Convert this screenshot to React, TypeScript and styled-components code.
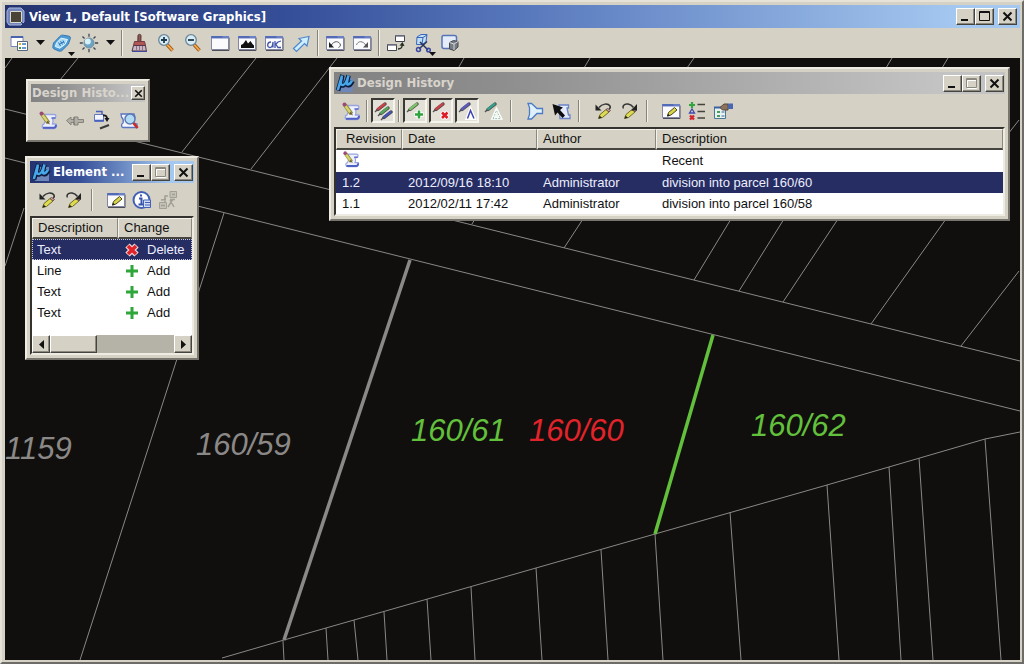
import React from "react";
import styled, { createGlobalStyle, css } from "styled-components";

const face = "#d5d1c5";
const navy = "#252d63";

const GlobalStyle = createGlobalStyle`
  * { box-sizing: border-box; }
  body { margin: 0; font-family: "Liberation Sans", Arial, sans-serif; font-size: 13px; color: #111; }
  button { font: inherit; color: inherit; padding: 0; margin: 0; border: 0; background: none; }
`;

const raised = css`
  border: 1px solid;
  border-color: #fff #45443f #45443f #fff;
  box-shadow: inset -1px -1px #8b897f;
`;

const Frame = styled.main`
  display: flex;
  flex-direction: column;
  height: 100vh;
  min-height: 400px;
  padding: 3px 2px 2px 3px;
  background: ${face};
  border: 2px solid;
  border-color: #e6e2d8 #6e6c68 #6e6c68 #e6e2d8;
`;

const TitleBar = styled.header<{ $tone: "main" | "active" | "idle" | "tool" }>`
  display: flex;
  align-items: center;
  gap: ${(p) => (p.$tone === "main" ? 3 : p.$tone === "tool" ? 0 : 2)}px;
  flex: none;
  overflow: hidden;
  height: ${(p) => (p.$tone === "main" ? 23 : p.$tone === "tool" ? 18 : 22)}px;
  padding: 0 ${(p) => (p.$tone === "main" ? 3 : p.$tone === "tool" ? 0 : 1)}px 0 1px;
  color: ${(p) => (p.$tone === "main" || p.$tone === "active" ? "#fff" : "#d8d4cc")};
  background: ${(p) =>
    p.$tone === "main"
      ? "linear-gradient(90deg, #25336f 0%, #354f98 28%, #5676bb 50%, #a4c8f0 94%)"
      : p.$tone === "active"
      ? "linear-gradient(90deg, #25336f 0%, #354f98 30%, #a4c8f0 85%)"
      : "linear-gradient(90deg, #828282 0%, #8e8e8e 25%, #c3c3c3 90%)"};
`;

const Title = styled.h1`
  flex: 1;
  min-width: 0;
  margin: 0;
  white-space: nowrap;
  font-family: "DejaVu Sans Condensed", "DejaVu Sans", sans-serif;
  font-size: 13px;
  font-weight: 700;
  line-height: 18px;
`;

const CaptionGroup = styled.div`
  display: flex;
  flex: none;
`;

const CaptionButton = styled.button<{ $small?: boolean; $apart?: boolean }>`
  display: grid;
  place-items: center;
  width: ${(p) => (p.$small ? 14 : 19)}px;
  height: ${(p) => (p.$small ? 14 : 17)}px;
  margin-left: ${(p) => (p.$apart ? 4 : 0)}px;
  background: ${face};
  ${raised}
`;

const MainTools = styled.nav`
  display: flex;
  align-items: center;
  flex: none;
  height: 30px;
`;

const MainTool = styled.button`
  position: relative;
  display: grid;
  place-items: center;
  width: 27px;
  height: 26px;
`;

const Corner = styled.svg`
  position: absolute;
  right: 0;
  bottom: 0;
`;

const Caret = styled.button`
  display: grid;
  place-items: center;
  width: 16px;
  height: 26px;
`;

const Divider = styled.span<{ $h?: number; $l?: number; $r?: number }>`
  flex: none;
  width: 2px;
  height: ${(p) => p.$h ?? 22}px;
  margin: 0 ${(p) => p.$r ?? 2}px 0 ${(p) => p.$l ?? 3}px;
  border-left: 1px solid #85837a;
  border-right: 1px solid #f4f2ea;
`;

const Canvas = styled.section`
  position: relative;
  flex: 1;
  min-height: 0;
  overflow: hidden;
  background: #110f0d;
`;

const MapSvg = styled.svg`
  display: block;
  width: 100%;
  height: 100%;
`;

const ParcelLabel = styled.text`
  font-family: "Liberation Sans", Arial, sans-serif;
  font-style: italic;
  font-size: 31px;
`;

const Panel = styled.section<{ $x: number; $y: number; $w?: number; $right?: number }>`
  position: absolute;
  left: ${(p) => p.$x}px;
  top: ${(p) => p.$y}px;
  ${(p) => (p.$right !== undefined ? `right: ${p.$right}px;` : `width: ${p.$w}px;`)}
  padding: 3px;
  background: ${face};
  border: 2px solid;
  border-color: #eeebe2 #77756e #77756e #eeebe2;
`;

const Tools = styled.div<{ $h: number; $gap: number; $pad: number }>`
  display: flex;
  align-items: center;
  height: ${(p) => p.$h}px;
  gap: ${(p) => p.$gap}px;
  padding-left: ${(p) => p.$pad}px;
`;

const Tool = styled.button<{ $on?: boolean }>`
  display: grid;
  place-items: center;
  flex: none;
  width: 24px;
  height: 25px;
  ${(p) =>
    p.$on &&
    css`
      background: #e3e0d8;
      border: 2px solid;
      border-color: #3a3935 #f6f4ee #f6f4ee #3a3935;
    `}
`;

const Sunken = styled.div`
  background: #fff;
  border: 2px solid;
  border-color: #33322f #eeebe2 #eeebe2 #33322f;
`;

const Table = styled.table`
  width: 100%;
  table-layout: fixed;
  border-collapse: separate;
  border-spacing: 0;
  white-space: nowrap;
`;

const Th = styled.th<{ $pad?: number }>`
  height: 21px;
  padding: 0 0 0 ${(p) => p.$pad ?? 5}px;
  text-align: left;
  font-weight: 400;
  line-height: 16px;
  background: ${face};
  border-top: 1px solid #f4f2ea;
  border-left: 1px solid #f4f2ea;
  border-right: 1px solid #8b897f;
  border-bottom: 2px solid #45443f;
`;

const Row = styled.tr<{ $selected?: boolean; $focus?: boolean }>`
  color: ${(p) => (p.$selected ? "#eef" : "#111")};
  background: ${(p) => (p.$selected ? navy : "#fff")};
  outline: ${(p) => (p.$focus ? "1px dotted #c8c8dc" : "none")};
  outline-offset: -1px;
`;

const Td = styled.td<{ $pad?: number }>`
  height: 21px;
  padding: 0 0 0 ${(p) => p.$pad ?? 6}px;
  line-height: 16px;
`;

const Change = styled.span`
  display: flex;
  align-items: center;
  gap: 7px;
`;

const ElementList = styled.div`
  min-height: 117px;
`;

const ScrollBar = styled.div`
  display: flex;
  height: 18px;
  background: #b5b2a8;
`;

const ScrollButton = styled.button<{ $w: number; $end?: boolean }>`
  display: grid;
  place-items: center;
  width: ${(p) => p.$w}px;
  margin-left: ${(p) => (p.$end ? "auto" : 0)};
  background: ${face};
  ${raised}
`;

/* ---------- icons ---------- */

const Icon = ({ children, size = 20 }: { children: React.ReactNode; size?: number }) => (
  <svg width={size} height={size} viewBox="0 0 20 20" fill="none" aria-hidden="true">
    {children}
  </svg>
);

const MinGlyph = () => (
  <svg width="11" height="11" viewBox="0 0 11 11"><path d="M1 8h7v2H1z" fill="#111" /></svg>
);
const MaxGlyph = ({ off }: { off?: boolean }) => (
  <svg width="11" height="11" viewBox="0 0 11 11" fill="none">
    {off && <path d="M1.500 2.500h9v8h-9z" stroke="#fff" />}
    <path d="M.5 .5h10v9H.5z" stroke={off ? "#8b897f" : "#111"} />
    <path d="M0 1.500h11" stroke={off ? "#8b897f" : "#111"} />
  </svg>
);
const CloseGlyph = ({ size = 11 }: { size?: number }) => (
  <svg width={size} height={size} viewBox="0 0 11 11" fill="none">
    <path d="M1.500 1.500l8 8M9.500 1.500l-8 8" stroke="#111" strokeWidth="2" />
  </svg>
);
const CaretGlyph = () => (
  <svg width="9" height="6" viewBox="0 0 9 6"><path d="M0 0h9L4.500 5z" fill="#111" /></svg>
);

const AppLogo = () => (
  <Icon size={20}>
    <path d="M4 5h14v14H4z" fill="#6f87b8" />
    <path d="M7.500 2 3 17.500M7 5C5 11 5.500 13 8 12.500S12 8 13.500 2.500c-2 7-2 10 0 9.800S16.500 10 17.500 8" stroke="#0d1a3c" strokeWidth="4.600" />
    <path d="M7 2.500 2.800 17M6.800 4.500C5 10.500 5.500 12.300 8 12S12 8 13.500 2.500c-2 7-2 9.200-.3 9S16 9.500 17 7.500" stroke="#46a8e8" strokeWidth="2.600" />
  </Icon>
);

const ViewLogo = () => (
  <Icon size={20}>
    <path d="M3 1h12l3 3v11l-3 3H3l-2-3V4z" fill="#7186bc" stroke="#a9b6dc" />
    <path d="M4.500 4.500h11v11h-11z" fill="#4a4338" stroke="#ddd9cc" />
    <path d="M15 15l3 3" stroke="#2a3768" />
  </Icon>
);

const ViewAttributes = () => (
  <Icon>
    <path d="M2 3.500h12v10H2z" fill="#fff" stroke="#7486b4" />
    <path d="M2 3h12v2H2z" fill="#4964ad" />
    <path d="M8.500 8.500h10v9h-10z" fill="#fff" stroke="#59677e" />
    <path d="M10 10h2v2h-2z" fill="#e6b11c" /><path d="M10 14h2v2h-2z" fill="#3a9b43" />
    <path d="M13 11h4M13 15h4" stroke="#3a7bc0" strokeWidth="1.500" />
  </Icon>
);
const DisplayStyle = () => (
  <Icon>
    <path d="M1.500 10 8 3.200c1-1 2-1.200 3.200-1l5.800 1c1.400.4 1.700 1.300 1.300 2.500l-2 5.600L10 17.500c-1 .8-2 .9-3 .6l-4.800-2c-1.300-.6-1.600-1.600-1.300-2.800z" fill="#4d9bd4" stroke="#3678b4" />
    <path d="M4.500 10 9 5.200l6.500 1.300-2.300 4.700-5.400 4-4.500-1.700z" fill="#a9dcf5" stroke="#e3f6ff" />
    <path d="M6.500 9.500l2 3.500M8.500 8l2 3.500M11 7.500l1.500 3M7 11.500l5-2.800" stroke="#2f73bb" />
  </Icon>
);
const Brightness = () => (
  <Icon>
    <path d="M10 .8v3M10 16v3.200M.8 10h3M16 10h3.200M3.500 3.500l2 2M14.500 14.500l2 2M16.500 3.500l-2 2M3.500 16.500l2-2" stroke="#3c4654" strokeWidth="1.300" />
    <circle cx="10" cy="10" r="5" fill="#6aa4c4" stroke="#7890a0" />
    <circle cx="8.800" cy="8.500" r="3" fill="#d6f0f8" />
  </Icon>
);
const Brush = () => (
  <Icon>
    <path d="M9 2.500C9 1 12 1 12 2.500L11.800 9h-3z" fill="#8b5a55" stroke="#5a2f30" />
    <path d="M5.500 8.500h10l1 4h-12z" fill="#b05654" stroke="#743c40" />
    <path d="M4.500 12.500h12l.8 5.500H3z" fill="#c7b8c4" stroke="#54344a" />
    <path d="M7.500 13v5M10.500 13v5M13.500 13v5" stroke="#8f6f84" />
    <path d="M3 18.500h15" stroke="#3d4b9c" />
  </Icon>
);
const Zoom = ({ plus }: { plus?: boolean }) => (
  <Icon>
    <path d="M11 11.500l5.500 6" stroke="#a45518" strokeWidth="3.500" />
    <path d="M11 11.500l5.500 6" stroke="#f2b14c" strokeWidth="1.800" />
    <circle cx="8" cy="7" r="5.300" fill="#d7ecf5" stroke="#6a8698" strokeWidth="1.300" />
    <path d={plus ? "M5 7h6M8 4v6" : "M5 7h6"} stroke="#1d3b4d" strokeWidth="1.800" />
  </Icon>
);
const WindowIcon = ({ children }: { children?: React.ReactNode }) => (
  <Icon>
    <path d="M2 17.500h17V4.500" stroke="#4f4d58" />
    <path d="M1.500 3.500h17v13h-17z" fill="#fbfbfd" stroke="#8187a0" />
    <path d="M1 3h18v2.500H1z" fill="#6c80c4" />
    <path d="M1.500 4h11" stroke="#3a55a8" />
    {children}
  </Icon>
);
const FitGlyph = () => <path d="M4 15v-3l2-1 3-4 2 3.500 2.500-2.500 2 3 1.500 1.500V15z" fill="#111" />;
const RotateGlyph = () => (
  <path d="M7 9c-4 0-4.500 5.500-1 5.500S8.500 9 9 9.500v5M11 8V15M11 12l3-3M12 11.500l2 3h3M14 9l3-1" stroke="#4355a8" strokeWidth="1.300" />
);
const BackGlyph = () => (
  <><path d="M6 12.500c3-5 8-5 9.500-.5-.4 1.500-1 2-2 2.500" stroke="#555" /><path d="M4 9v5.500h5z" fill="#222" /></>
);
const NextGlyph = () => (
  <><path d="M14 12.500C11 7.500 6 7.500 4.500 12" stroke="#777" /><path d="M16 9v5.500h-5z" fill="#555" /></>
);
const PanArrow = () => (
  <Icon>
    <path d="M2.500 15.500 10.500 8 8 5.500l10-2-2 9.500-2.500-2.500-8 8z" fill="#cdeefd" stroke="#4f86cc" strokeWidth="1.200" />
  </Icon>
);
const CopyView = () => (
  <Icon>
    <path d="M9.500 2.500h9v6h-9zM1.500 11.500h9v6h-9z" fill="#fff" stroke="#444450" />
    <path d="M9.500 3h9M1.500 12h9" stroke="#77778c" strokeWidth="1.500" />
    <path d="M12 16c3.500 0 4-1.500 4.300-4" stroke="#22301f" strokeWidth="1.500" /><path d="M13.500 12.500 16.500 9l2 4z" fill="#22301f" />
  </Icon>
);
const ClipVolume = () => (
  <Icon>
    <path d="M4 4l4-2.500h6L13 9l-4 2.500H3.500z" fill="#bdddf6" stroke="#3c66b8" />
    <path d="M4 4.500h6L14 2M10 4.500 9 11" stroke="#3c66b8" />
    <path d="M7 9l8 8M14 8.500 6 16" stroke="#28345a" strokeWidth="1.500" />
    <circle cx="5.500" cy="16.500" r="2" stroke="#3948a4" strokeWidth="1.500" /><circle cx="15.500" cy="17" r="1.800" stroke="#3948a4" strokeWidth="1.500" />
  </Icon>
);
const ClipMask = () => (
  <Icon>
    <path d="M3.500 2.500h11c1.500 0 2 .5 2 2V9L9 15.500H4c-1.500 0-2-.5-2-2V4.500c0-1.500.5-2 1.500-2z" fill="#e4ecfa" stroke="#5574b8" strokeWidth="1.500" />
    <path d="M9.500 9.500l4-2 4.500 1v5.500l-4 3.500-4.500-1.500z" fill="#777b82" stroke="#44474e" />
    <path d="M9.500 9.500 14 11l4-2.500M14 11v6" stroke="#d4d6da" />
  </Icon>
);

const Scroll = ({ small }: { small?: boolean }) => (
  <Icon size={small ? 18 : 20}>
    <path d="M7 4.500h9c2.500 0 2.500 3.500 0 4h-1.500c1 2 .5 4 0 5.500H18c1 2-.3 4.500-2 4.500H6.500c-3 0-3-4-.5-4.500 2-3 1-6 0-7z" fill="#eef0fc" stroke="#98a5e0" strokeWidth="1.300" />
    <path d="M5 17.800h11c1.500-.3 2-1.500 2-3" stroke="#4f60c4" strokeWidth="2" />
    <path d="M13.500 8h4" stroke="#5a6bc8" strokeWidth="1.500" />
    <path d="M4 4l6.500 9" stroke="#8d8740" strokeWidth="4" /><path d="M4.500 5l5.500 7.500" stroke="#d8d46e" strokeWidth="2.400" />
    <circle cx="3.500" cy="3.500" r="2" fill="#9c4a7a" /><path d="M10 10.500l2 4-4-2z" fill="#6d6230" />
  </Icon>
);
const ArrowsOff = () => (
  <Icon>
    <path d="M1.500 10.500 6 7v2.500h3V7h4v2.500h5.500v3H13V15H9v-2.500H6V15z" fill="#b2afa6" stroke="#85837b" />
    <path d="M9 7v8" stroke="#77756e" />
  </Icon>
);
const RestoreIcon = () => (
  <Icon>
    <path d="M2.500 4.500h9v7h-9z" fill="#f4f6fe" stroke="#6279c2" /><path d="M4 1.500h6v3M3 10.500h9" stroke="#4862ba" strokeWidth="1.500" />
    <path d="M11 5.500c3-.5 4 1 4.300 3.500" stroke="#15171c" strokeWidth="1.800" /><path d="M12.500 8h5l-2.500 4z" fill="#15171c" />
    <path d="M8 18.500l9-3.500" stroke="#3a3a3a" strokeWidth="2" />
  </Icon>
);
const BrowseIcon = () => (
  <Icon>
    <path d="M2 4h13l1 3-2 6 4 1v3.500H4c-2-.5-2-3.500 0-4.500 1-3 0-4.500-1.500-6z" fill="#f3f5fd" stroke="#5b74c2" strokeWidth="1.300" />
    <circle cx="11" cy="9" r="5" fill="#b3dcf4" stroke="#5a78b4" strokeWidth="1.500" />
    <path d="M14.500 13l4 5" stroke="#cc2b2b" strokeWidth="2.800" />
  </Icon>
);
const pencilBody = (
  <>
    <path d="M5.500 17.500 7 13.500 13 8.500l3 2.500-6.500 5.500z" fill="#dfdb4e" stroke="#6d6a2c" />
    <path d="M13 8.500l1.500-1 3 2-1.500 1.500z" fill="#d89aa8" stroke="#5a4a3a" strokeWidth=".8" />
    <path d="M5.500 17.500l3.500-.8-2.300-2z" fill="#222" />
  </>
);
const Undo = () => (
  <Icon>
    {pencilBody}
    <path d="M6 6.500c3-4 9-4.500 11-1.500.6 1.500 0 2.500-1 3" stroke="#333" strokeWidth="1.500" /><path d="M2.500 3.500v6h6z" fill="#222" />
  </Icon>
);
const Redo = () => (
  <Icon>
    {pencilBody}
    <path d="M14.500 6.500C11.500 2.500 6.500 2 4.500 4.500 3.500 6 4 7 4.500 7.500" stroke="#333" strokeWidth="1.500" /><path d="M18 3v6.500h-6z" fill="#222" />
  </Icon>
);
const EditWindow = () => (
  <WindowIcon>
    <path d="M6.500 15l1-3.500 6-5 2.500 2.500-6 5z" fill="#d9d548" stroke="#4b481c" /><path d="M6 15.500l3-.7-2-2z" fill="#222" />
  </WindowIcon>
);
const InfoIcon = () => (
  <Icon>
    <circle cx="9.500" cy="10" r="8" fill="#fff" stroke="#4160b4" strokeWidth="2" />
    <path d="M9 4.500v2M7 8.500h2.500v5.500M6.500 14.500h6" stroke="#3652ac" strokeWidth="2" />
    <path d="M11.500 10h7v7.500h-7z" fill="#cfdcf8" stroke="#4160b4" />
    <path d="M13 12.500h5M13 15h5" stroke="#4160b4" />
  </Icon>
);
const ExportOff = () => (
  <Icon>
    <path d="M12 1.500h6.500v6H12zM1.500 12.500h7v6h-7z" stroke="#a19f96" fill="#c4c1b7" />
    <path d="M3 10l5-.5M10 6H7v6M12 10l4 7M15 9l-5 8M14 4.500h3M3 15.500h4M12 9.500h5" stroke="#a19f96" strokeWidth="1.500" />
  </Icon>
);
const Pen = ({ color, dx = 0, dy = 0 }: { color: string; dx?: number; dy?: number }) => (
  <g transform={`translate(${dx} ${dy})`}>
    <path d="M2 11l3-3" stroke="#555" strokeWidth="1.500" />
    <path d="M5 8.500 12 3" stroke="#4a4642" strokeWidth="3.400" strokeLinecap="round" />
    <path d="M5.200 8 11.500 3" stroke={color} strokeWidth="2.400" strokeLinecap="round" />
  </g>
);
const AllPens = () => (
  <Icon><Pen color="#c8444c" dy={0} /><Pen color="#53aa5c" dx={3} dy={4} /><Pen color="#4654b8" dx={6} dy={8} /></Icon>
);
const AddPen = () => (
  <Icon><Pen color="#7cc46a" /><path d="M9.500 13.500h9M14 9v9" stroke="#fff" strokeWidth="4.500" /><path d="M10 13.500h8M14 9.500v8" stroke="#2fa43e" strokeWidth="2.500" /></Icon>
);
const DeletePen = () => (
  <Icon><Pen color="#c8444c" /><path d="M10.500 11l6.500 6.500M17 11l-6.500 6.500" stroke="#fff" strokeWidth="4.500" /><path d="M11 11.500l5.500 5.500M16.500 11.500 11 17" stroke="#dc1f26" strokeWidth="2.600" /></Icon>
);
const ChangePen = () => (
  <Icon><Pen color="#5a5cc0" /><path d="M10 17.500 13.500 8.500 17.500 17.500z" fill="#fff" stroke="#fff" strokeWidth="3" /><path d="M10.500 17.500 13.500 9.500l3.500 8" stroke="#3d45b4" strokeWidth="1.500" /></Icon>
);
const SamePen = () => (
  <Icon><Pen color="#37a08a" /><path d="M9.500 17.500 13.500 8.500l4.500 9z" fill="#f2f4ee" stroke="#fff" strokeWidth="2.500" /><path d="M10 17.500 13.500 9.500l4 8z" stroke="#9cc9b8" strokeDasharray="2 1" /></Icon>
);
const Filter = () => (
  <Icon><path d="M3 2.500h3.500L12 7.500h5.500v5H12L6.500 18H3l1.500-4.500v-7z" fill="#dff1fb" stroke="#4c7cc6" strokeWidth="1.300" /></Icon>
);
const SelectScroll = () => (
  <Icon>
    <path d="M8 4h9.500v3H16l1.500 7H19v3.500H9z" fill="#e4ebfb" stroke="#6b84c8" strokeWidth="1.300" />
    <path d="M1.500 3l10.500 3.500-3 2.500 5 5.500-2.500 2.500-5-5.500L4 14.500z" fill="#0e0e10" />
  </Icon>
);
const ListIcon = () => (
  <Icon>
    <path d="M2 4h6M5 1v6" stroke="#32a540" strokeWidth="2.200" />
    <path d="M2.500 12 5 8l2.500 4z" stroke="#4048ac" strokeWidth="1.300" />
    <path d="M3 14.500l4 4M7 14.500l-4 4" stroke="#d0232b" strokeWidth="2.200" />
    <path d="M10.500 3.500H18M10.500 10.500H18M10.500 17H18" stroke="#44423c" strokeWidth="1.500" />
  </Icon>
);
const PropertiesIcon = () => (
  <Icon>
    <path d="M1.500 6.500h11v11h-11z" fill="#e8f2ee" stroke="#4a7796" /><path d="M1 6.500h12" stroke="#3a62a6" strokeWidth="2" />
    <path d="M4 10h3v2H4zM4 14h3v2H4z" fill="#4e9c5e" /><path d="M8.500 11h3M8.500 15h3" stroke="#3a62a6" />
    <path d="M7 6.500 11 3h4v6H9.500z" fill="#8c745c" stroke="#54463a" /><path d="M15 2.500h5v5.500h-5z" fill="#4966ae" />
  </Icon>
);
const Plus = () => (
  <svg width="16" height="14" viewBox="0 0 16 14"><path d="M2 7h12M8 1v12" stroke="#2fa63a" strokeWidth="3" /></svg>
);
const Cross = () => (
  <svg width="16" height="14" viewBox="0 0 16 14"><path d="M3.500 2.500l9 9M12.500 2.500l-9 9" stroke="#f4dcdc" strokeWidth="6" /><path d="M4 3l8 8M12 3l-8 8" stroke="#e0222b" strokeWidth="3.500" /></svg>
);

/* ---------- map data, in drawing units ---------- */

type Segment = [number, number, number, number];

const boundaries: Segment[] = [
  [5, 109, 1020, 361], [5, 158, 1020, 411],
  [12, 58, 5, 68], [78, 58, 60, 80], [256, 58, 182, 152], [337, 58, 251, 169],
  [464, 58, 456, 72], [590, 58, 584, 68], [694, 58, 687, 68], [892, 58, 886, 68], [948, 58, 942, 68],
  [1019, 120, 1008, 134], [475, 219, 472, 224], [583, 219, 564, 248], [731, 219, 694, 280],
  [784, 219, 739, 291], [838, 219, 783, 302], [946, 219, 871, 324], [1019, 271, 961, 346],
  [24, 208, 5, 266], [224, 213, 80, 660],
  [283, 641, 284, 660], [326, 628, 328, 660], [354, 620, 358, 660], [384, 612, 387, 660],
  [427, 599, 431, 660], [471, 587, 475, 660], [536, 568, 542, 660], [601, 550, 608, 660],
  [655, 534, 663, 660], [730, 512, 741, 660], [827, 485, 839, 660], [889, 467, 901, 660],
  [919, 458, 933, 660], [985, 439, 1001, 660],
];

const labels = [
  { text: "1159", x: 5, y: 459, fill: "#8b8987" },
  { text: "160/59", x: 196, y: 455, fill: "#8b8987" },
  { text: "160/61", x: 411, y: 441, fill: "#62c03c" },
  { text: "160/60", x: 529, y: 441, fill: "#e3232b" },
  { text: "160/62", x: 751, y: 436, fill: "#62c03c" },
];

const revisions = [
  { rev: "", date: "", author: "", note: "Recent" },
  { rev: "1.2", date: "2012/09/16 18:10", author: "Administrator", note: "division into parcel 160/60", selected: true },
  { rev: "1.1", date: "2012/02/11 17:42", author: "Administrator", note: "division into parcel 160/58" },
];

const elements = [
  { kind: "Text", change: "Delete", selected: true },
  { kind: "Line", change: "Add" },
  { kind: "Text", change: "Add" },
  { kind: "Text", change: "Add" },
];

const Captions = ({ main }: { main?: boolean }) => (
  <CaptionGroup>
    <CaptionButton aria-label="Minimize"><MinGlyph /></CaptionButton>
    <CaptionButton aria-label="Maximize"><MaxGlyph off={!main} /></CaptionButton>
    <CaptionButton aria-label="Close" $apart><CloseGlyph /></CaptionButton>
  </CaptionGroup>
);

const ParcelMap = () => (
  <MapSvg viewBox="5 58 1015 602" preserveAspectRatio="xMinYMin slice">
    <g stroke="#8a8886" strokeWidth="1">
      {boundaries.map(([x1, y1, x2, y2], i) => (
        <line key={i} x1={x1} y1={y1} x2={x2} y2={y2} />
      ))}
      <polyline points="222,658 284,640 655,534 827,485 985,439 1020,432" fill="none" />
    </g>
    <line x1="410" y1="260" x2="284" y2="640" stroke="#8b8987" strokeWidth="3.500" />
    <line x1="713" y1="335" x2="655" y2="534" stroke="#62c03c" strokeWidth="3.500" />
    {labels.map((l) => (
      <ParcelLabel key={l.text} x={l.x} y={l.y} fill={l.fill}>{l.text}</ParcelLabel>
    ))}
  </MapSvg>
);

export default function App() {
  return (
    <>
      <GlobalStyle />
      <Frame>
        <TitleBar $tone="main">
          <ViewLogo />
          <Title>View 1, Default [Software Graphics]</Title>
          <Captions main />
        </TitleBar>
        <MainTools aria-label="View tools">
          <MainTool aria-label="View Attributes"><ViewAttributes /></MainTool>
          <Caret aria-label="View list"><CaretGlyph /></Caret>
          <MainTool aria-label="Display Style">
            <DisplayStyle />
            <Corner width="7" height="4" viewBox="0 0 7 4"><path d="M0 0h7L3.500 4z" fill="#111" /></Corner>
          </MainTool>
          <MainTool aria-label="Brightness"><Brightness /></MainTool>
          <Caret aria-label="Brightness options"><CaretGlyph /></Caret>
          <Divider $h={26} />
          <MainTool aria-label="Update View"><Brush /></MainTool>
          <MainTool aria-label="Zoom In"><Zoom plus /></MainTool>
          <MainTool aria-label="Zoom Out"><Zoom /></MainTool>
          <MainTool aria-label="Window Area"><WindowIcon /></MainTool>
          <MainTool aria-label="Fit View"><WindowIcon><FitGlyph /></WindowIcon></MainTool>
          <MainTool aria-label="Rotate View"><WindowIcon><RotateGlyph /></WindowIcon></MainTool>
          <MainTool aria-label="Pan View"><PanArrow /></MainTool>
          <Divider $h={26} />
          <MainTool aria-label="View Previous"><WindowIcon><BackGlyph /></WindowIcon></MainTool>
          <MainTool aria-label="View Next"><WindowIcon><NextGlyph /></WindowIcon></MainTool>
          <Divider $h={26} />
          <MainTool aria-label="Copy View"><CopyView /></MainTool>
          <MainTool aria-label="Clip Volume">
            <ClipVolume />
            <Corner width="7" height="4" viewBox="0 0 7 4"><path d="M0 0h7L3.500 4z" fill="#111" /></Corner>
          </MainTool>
          <MainTool aria-label="Clip Mask"><ClipMask /></MainTool>
        </MainTools>

        <Canvas>
          <ParcelMap />

          <Panel $x={21} $y={21} $w={124}>
            <TitleBar $tone="tool">
              <Title>Design Histo...</Title>
              <CaptionButton $small aria-label="Close"><CloseGlyph size={9} /></CaptionButton>
            </TitleBar>
            <Tools $h={35} $gap={3} $pad={5}>
              <Tool aria-label="Commit"><Scroll /></Tool>
              <Tool aria-label="Compare"><ArrowsOff /></Tool>
              <Tool aria-label="Restore"><RestoreIcon /></Tool>
              <Tool aria-label="Show History"><BrowseIcon /></Tool>
            </Tools>
          </Panel>

          <Panel $x={20} $y={98} $w={174}>
            <TitleBar $tone="active">
              <AppLogo />
              <Title>Element ...</Title>
              <Captions />
            </TitleBar>
            <Tools $h={33} $gap={2} $pad={5}>
              <Tool aria-label="Undo change"><Undo /></Tool>
              <Tool aria-label="Redo change"><Redo /></Tool>
              <Divider $l={4} $r={9} />
              <Tool aria-label="Edit"><EditWindow /></Tool>
              <Tool aria-label="Information"><InfoIcon /></Tool>
              <Tool aria-label="Export"><ExportOff /></Tool>
            </Tools>
            <Sunken>
              <ElementList>
                <Table>
                  <colgroup><col style={{ width: 86 }} /><col /></colgroup>
                  <thead><tr><Th>Description</Th><Th>Change</Th></tr></thead>
                  <tbody>
                    {elements.map((e, i) => (
                      <Row key={i} $selected={e.selected} $focus={e.selected}>
                        <Td $pad={5}>{e.kind}</Td>
                        <Td><Change>{e.change === "Delete" ? <Cross /> : <Plus />}{e.change}</Change></Td>
                      </Row>
                    ))}
                  </tbody>
                </Table>
              </ElementList>
              <ScrollBar>
                <ScrollButton $w={18} aria-label="Scroll left"><svg width="5" height="9"><path d="M5 0v9L0 4.500z" fill="#111" /></svg></ScrollButton>
                <ScrollButton $w={47} aria-label="Scroll thumb" />
                <ScrollButton $w={18} $end aria-label="Scroll right"><svg width="5" height="9"><path d="M0 0v9l5-4.500z" fill="#111" /></svg></ScrollButton>
              </ScrollBar>
            </Sunken>
          </Panel>

          <Panel $x={324} $y={9} $right={10}>
            <TitleBar $tone="idle">
              <AppLogo />
              <Title>Design History</Title>
              <Captions />
            </TitleBar>
            <Tools $h={33} $gap={2} $pad={5}>
              <Tool aria-label="Commit"><Scroll /></Tool>
              <Divider $l={1} $r={1} />
              <Tool $on aria-label="Show all changes"><AllPens /></Tool>
              <Divider $l={1} $r={1} />
              <Tool $on aria-label="Show added"><AddPen /></Tool>
              <Tool $on aria-label="Show deleted"><DeletePen /></Tool>
              <Tool $on aria-label="Show modified"><ChangePen /></Tool>
              <Tool aria-label="Show unchanged"><SamePen /></Tool>
              <Divider $l={3} $r={9} />
              <Tool aria-label="Filter"><Filter /></Tool>
              <Tool aria-label="Select"><SelectScroll /></Tool>
              <Divider $l={3} $r={9} />
              <Tool aria-label="Undo change"><Undo /></Tool>
              <Tool aria-label="Redo change"><Redo /></Tool>
              <Divider $l={3} $r={9} />
              <Tool aria-label="Edit"><EditWindow /></Tool>
              <Tool aria-label="Summary"><ListIcon /></Tool>
              <Tool aria-label="Properties"><PropertiesIcon /></Tool>
            </Tools>
            <Sunken>
              <Table>
                <colgroup>
                  <col style={{ width: 66 }} /><col style={{ width: 135 }} /><col style={{ width: 119 }} /><col />
                </colgroup>
                <thead>
                  <tr><Th $pad={9}>Revision</Th><Th>Date</Th><Th>Author</Th><Th>Description</Th></tr>
                </thead>
                <tbody>
                  {revisions.map((r) => (
                    <Row key={r.note} $selected={r.selected}>
                      <Td>{r.rev || <Scroll small />}</Td>
                      <Td>{r.date}</Td>
                      <Td>{r.author}</Td>
                      <Td>{r.note}</Td>
                    </Row>
                  ))}
                </tbody>
              </Table>
            </Sunken>
          </Panel>
        </Canvas>
      </Frame>
    </>
  );
}
